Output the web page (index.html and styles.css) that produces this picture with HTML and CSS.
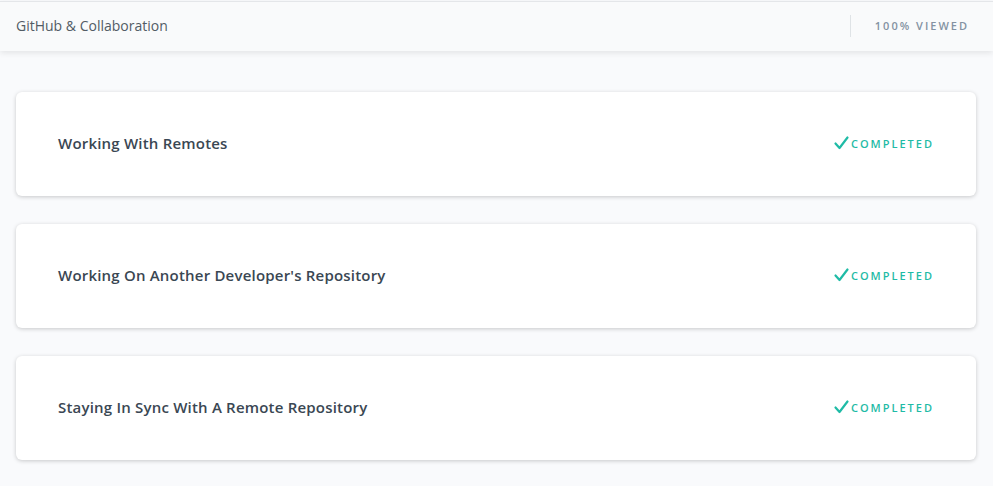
FILE: index.html
```html
<!DOCTYPE html>
<html>
<head>
<meta charset="utf-8">
<link rel="stylesheet" href="styles.css">
</head>
<body>
<header class="topbar">
  <div class="topbar-title">GitHub &amp; Collaboration</div>
  <div class="topbar-right">
    <span class="divider"></span>
    <span class="viewed">100% VIEWED</span>
  </div>
</header>
<main class="list">
  <div class="card">
    <div class="card-title">Working With Remotes</div>
    <div class="status">
      <svg class="check" width="15" height="14" viewBox="0 0 15 14"><path d="M1.5 7.5 L5.5 12 L13.5 1.5" fill="none" stroke="currentColor" stroke-width="2.2" stroke-linecap="round" stroke-linejoin="round"/></svg>
      <span>COMPLETED</span>
    </div>
  </div>
  <div class="card">
    <div class="card-title">Working On Another Developer's Repository</div>
    <div class="status">
      <svg class="check" width="15" height="14" viewBox="0 0 15 14"><path d="M1.5 7.5 L5.5 12 L13.5 1.5" fill="none" stroke="currentColor" stroke-width="2.2" stroke-linecap="round" stroke-linejoin="round"/></svg>
      <span>COMPLETED</span>
    </div>
  </div>
  <div class="card">
    <div class="card-title">Staying In Sync With A Remote Repository</div>
    <div class="status">
      <svg class="check" width="15" height="14" viewBox="0 0 15 14"><path d="M1.5 7.5 L5.5 12 L13.5 1.5" fill="none" stroke="currentColor" stroke-width="2.2" stroke-linecap="round" stroke-linejoin="round"/></svg>
      <span>COMPLETED</span>
    </div>
  </div>
</main>
</body>
</html>
```

FILE: styles.css
```css
* { box-sizing: border-box; }
html, body {
  margin: 0;
  padding: 0;
  background: #f9fafc;
  font-family: "Open Sans", "Liberation Sans", sans-serif;
}
.topbar {
  height: 50px;
  margin-top: 1px;
  border-top: 1px solid #e4e6e9;
  background: #f9fafb;
  display: flex;
  align-items: center;
  justify-content: space-between;
  padding: 0 24px 0 16px;
  box-shadow: 0 2px 6px rgba(0, 0, 0, 0.09);
  position: relative;
}
.topbar-title {
  font-size: 14px;
  color: #525c65;
  margin-top: -2px;
}
.topbar-right {
  display: flex;
  align-items: center;
  margin-top: -2px;
}
.divider {
  width: 1px;
  height: 22px;
  background: #dfe3e6;
  margin-right: 24px;
}
.viewed {
  font-size: 11px;
  font-weight: 600;
  letter-spacing: 2px;
  color: #8492a2;
}
.list {
  padding: 41px 17px 26px 16px;
  display: flex;
  flex-direction: column;
  gap: 28px;
}
.card {
  height: 104px;
  background: #fff;
  border-radius: 6px;
  box-shadow: 0 1px 4px rgba(0, 0, 0, 0.2);
  display: flex;
  align-items: center;
  justify-content: space-between;
  padding: 0 42px;
}
.card-title {
  font-size: 15px;
  font-weight: 600;
  color: #3a4753;
  letter-spacing: 0.2px;
  margin-top: -2px;
}
.status {
  display: flex;
  align-items: center;
  color: #1fbba6;
  font-size: 11px;
  font-weight: 600;
  letter-spacing: 2px;
  margin-top: -2px;
}
.check {
  margin-right: 2px;
  margin-top: -1px;
}
```
